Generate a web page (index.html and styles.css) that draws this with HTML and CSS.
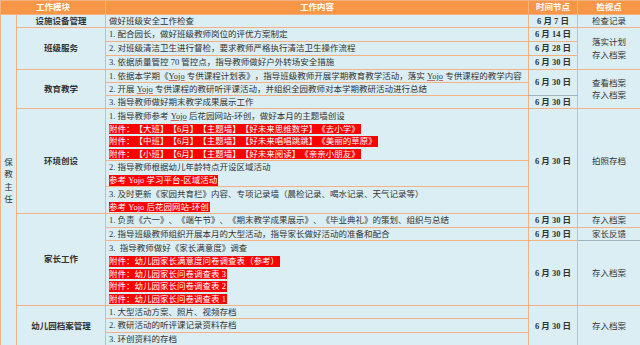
FILE: index.html
```html
<!DOCTYPE html>
<html lang="zh-CN">
<head>
<meta charset="utf-8">
<title>保教主任工作计划</title>
<link rel="stylesheet" href="styles.css">
</head>
<body>
<table class="plan">
  <colgroup>
    <col class="c-role"><col class="c-mod"><col class="c-content"><col class="c-time"><col class="c-check">
  </colgroup>
  <thead>
    <tr class="h14">
      <th colspan="2">工作模块</th>
      <th>工作内容</th>
      <th>时间节点</th>
      <th>检视点</th>
    </tr>
  </thead>
  <tbody>
    <tr class="h13">
      <td class="role" rowspan="16"><div class="vert">保教主任</div></td>
      <td class="mod">设施设备管理</td>
      <td class="txt">做好班级安全工作检查</td>
      <td class="time">6 月 7 日</td>
      <td class="chk">检查记录</td>
    </tr>
    <tr class="h14">
      <td class="mod" rowspan="3">班级服务</td>
      <td class="txt">1. 配合园长，做好班级教师岗位的评优方案制定</td>
      <td class="time">6 月 14 日</td>
      <td class="chk" rowspan="3"><div class="ln">落实计划</div><div class="ln">存入档案</div></td>
    </tr>
    <tr class="h14">
      <td class="txt">2. 对班级清洁卫生进行督检，要求教师严格执行清洁卫生操作流程</td>
      <td class="time">6 月 28 日</td>
    </tr>
    <tr class="h14">
      <td class="txt">3. 依据质量管控 70 管控点，指导教师做好户外转场安全措施</td>
      <td class="time">6 月 30 日</td>
    </tr>
    <tr class="h13">
      <td class="mod" rowspan="3">教育教学</td>
      <td class="txt">1. 依据本学期《<span class="sp">Yojo</span> 专供课程计划表》，指导班级教师开展学期教育教学活动，落实 <span class="sp">Yojo</span> 专供课程的教学内容</td>
      <td class="time gb" rowspan="2">6 月 30 日</td>
      <td class="chk" rowspan="3"><div class="ln">查看档案</div><div class="ln">存入档案</div></td>
    </tr>
    <tr class="h13">
      <td class="txt">2. 开展 <span class="sp">Yojo</span> 专供课程的教研听评课活动，并组织全园教师对本学期教研活动进行总结</td>
    </tr>
    <tr class="h13">
      <td class="txt">3. 指导教师做好期末教学成果展示工作</td>
      <td class="time">6 月 30 日</td>
    </tr>
    <tr class="h52">
      <td class="mod" rowspan="3">环境创设</td>
      <td class="txt">
        <div class="ln">1. 指导教师参考 <span class="sp">Yojo</span> 后花园网站-环创，做好本月的主题墙创设</div>
        <div class="ln"><span class="hl">附件：【大班】【6月】【主题墙】【好未来思维数学】《去小学》</span></div>
        <div class="ln"><span class="hl">附件：【中班】【6月】【主题墙】【好未来唱唱跳跳】《美丽的草原》</span></div>
        <div class="ln"><span class="hl">附件：【小班】【6月】【主题墙】【好未来阅读】《亲亲小朋友》</span></div>
      </td>
      <td class="time" rowspan="3">6 月 30 日</td>
      <td class="chk" rowspan="3">拍照存档</td>
    </tr>
    <tr class="h26">
      <td class="txt">
        <div class="ln">2. 指导教师根据幼儿年龄特点开设区域活动</div>
        <div class="ln"><span class="hl">参考 Yojo 学习平台-区域活动</span></div>
      </td>
    </tr>
    <tr class="h27">
      <td class="txt">
        <div class="ln">3. 及时更新《家园共育栏》内容、专项记录墙（晨检记录、喝水记录、天气记录等）</div>
        <div class="ln"><span class="hl">参考 Yojo 后花园网站-环创</span></div>
      </td>
    </tr>
    <tr class="h14">
      <td class="mod" rowspan="3">家长工作</td>
      <td class="txt">1. 负责《六一》、《端午节》、《期末教学成果展示》、《毕业典礼》的策划、组织与总结</td>
      <td class="time">6 月 30 日</td>
      <td class="chk">存入档案</td>
    </tr>
    <tr class="h13">
      <td class="txt">2. 指导班级教师组织开展本月的大型活动，指导家长做好活动的准备和配合</td>
      <td class="time">6 月 30 日</td>
      <td class="chk gb">家长反馈</td>
    </tr>
    <tr class="h65">
      <td class="txt">
        <div class="ln">3.&nbsp; 指导教师做好《家长满意度》调查</div>
        <div class="ln"><span class="hl">附件：幼儿园家长满意度问卷调查表（参考）</span></div>
        <div class="ln"><span class="hl">附件：幼儿园家长问卷调查表 3</span></div>
        <div class="ln"><span class="hl">附件：幼儿园家长问卷调查表 2</span></div>
        <div class="ln"><span class="hl">附件：幼儿园家长问卷调查表 1</span></div>
      </td>
      <td class="time">6 月 30 日</td>
      <td class="chk">存入档案</td>
    </tr>
    <tr class="h13">
      <td class="mod" rowspan="3">幼儿园档案管理</td>
      <td class="txt">1. 大型活动方案、照片、视频存档</td>
      <td class="time" rowspan="3">6 月 30 日</td>
      <td class="chk" rowspan="3">存入档案</td>
    </tr>
    <tr class="h14">
      <td class="txt">2. 教研活动的听评课记录资料存档</td>
    </tr>
    <tr class="h14">
      <td class="txt">3. 环创资料的存档</td>
    </tr>
  </tbody>
</table>
</body>
</html>
```

FILE: styles.css
```css
html, body {
  margin: 0;
  padding: 0;
  background: #ffffff;
}

.plan {
  width: 640px;
  table-layout: fixed;
  border-collapse: collapse;
  font-family: "Liberation Serif", "Noto Sans CJK SC", serif;
  font-size: 8.5px;
  color: #333333;
  background: #daeef3;
  text-spacing-trim: space-all;
}

.c-role { width: 16px; }
.c-mod { width: 89px; }
.c-content { width: 423px; }
.c-time { width: 49px; }
.c-check { width: 63px; }

.plan th,
.plan td {
  border: 1px solid #f4b183;
  padding: 0;
  line-height: 11px;
  white-space: nowrap;
  overflow: hidden;
  vertical-align: middle;
}

.plan th {
  background: #f79646;
  color: #ffffff;
  font-weight: 700;
  text-align: center;
}

.h13 { height: 13px; }
.h14 { height: 14px; }
.h26 { height: 26px; }
.h27 { height: 27px; }
.h52 { height: 52px; }
.h65 { height: 65px; }

.role {
  text-align: center;
}

.vert {
  width: 1em;
  margin: 0 auto;
  white-space: normal;
  word-break: break-all;
  line-height: 12.5px;
}

.mod {
  text-align: center;
  font-weight: 700;
}

.txt {
  text-align: left;
  padding-left: 3px !important;
}

.time {
  text-align: center;
  font-weight: 700;
}

.chk {
  text-align: center;
}

.ln {
  height: 12.5px;
  line-height: 12.5px;
}

.hl {
  display: inline-block;
  line-height: 10.5px;
  vertical-align: middle;
  background: #ff0000;
  color: #ffffff;
  padding-right: 1px;
}

.sp {
  text-decoration: underline;
  text-decoration-color: #d06a6a;
}

.gb {
  border-bottom-color: #9fb3bf !important;
}
```
